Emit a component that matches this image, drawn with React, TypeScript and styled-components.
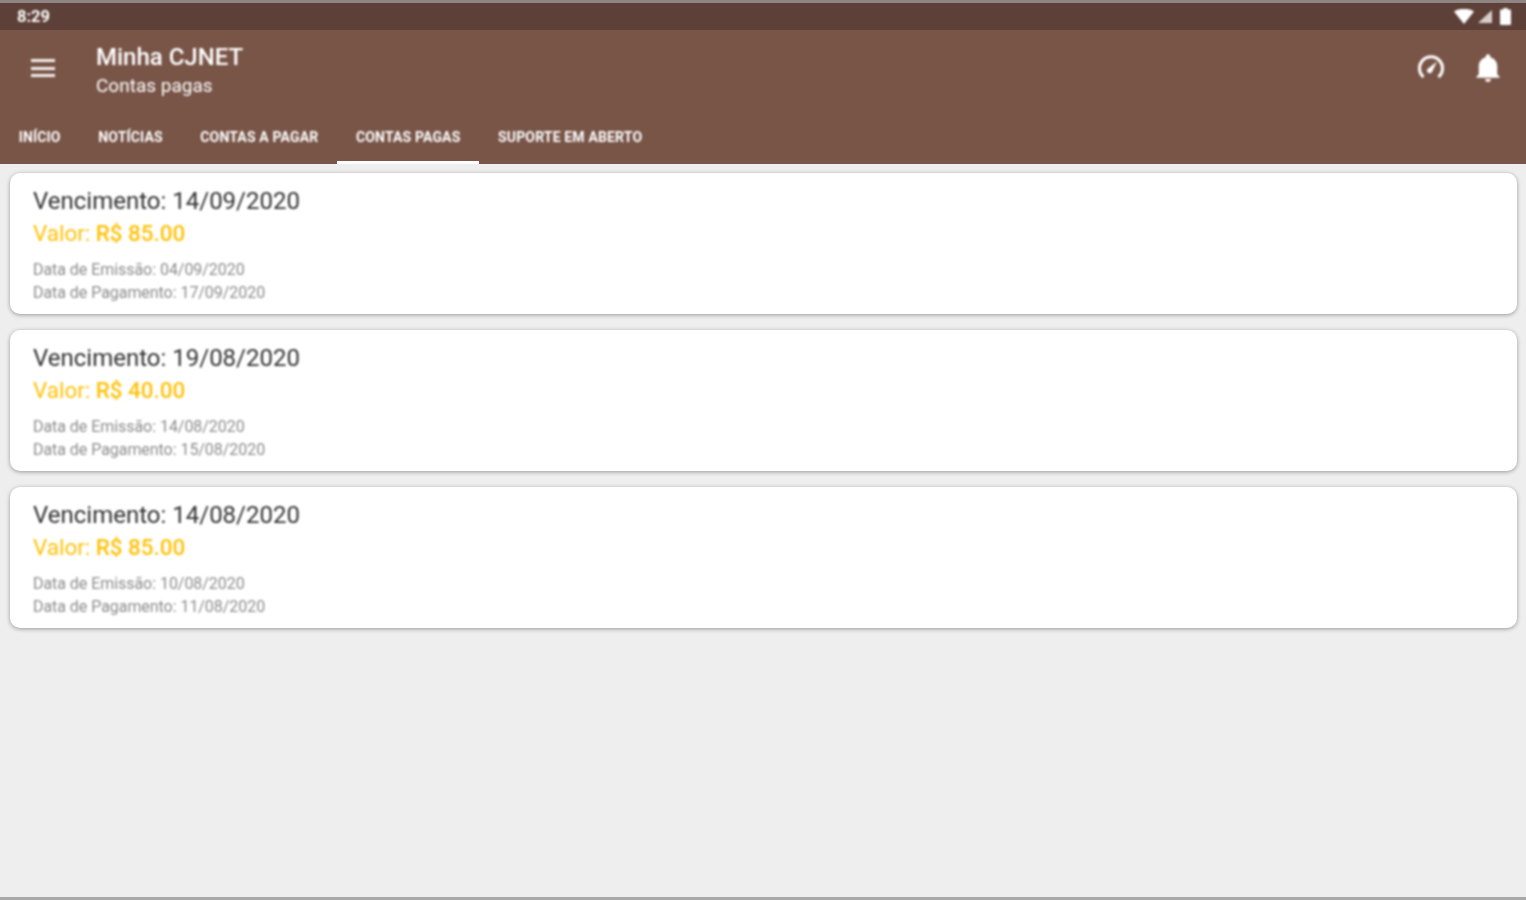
import React from 'react';
import styled, { createGlobalStyle } from 'styled-components';

const GlobalStyle = createGlobalStyle`
  html, body {
    margin: 0;
    padding: 0;
    height: 100%;
    background: #eeeeee;
    font-family: Roboto, "Liberation Sans", sans-serif;
  }
  #root {
    height: 100%;
  }
`;

const Page = styled.div`
  height: 900px;
  overflow: hidden;
  display: flex;
  flex-direction: column;
  background: #eeeeee;
  border-bottom: 3px solid #a8a8a8;
  box-sizing: border-box;
`;

const StatusBar = styled.div`
  height: 27px;
  margin-top: 3px;
  box-shadow: 0 -3px 0 #8f8583;
  background: #5d4037;
  display: flex;
  align-items: center;
  justify-content: space-between;
  padding: 0 15px 0 17px;
  color: #fff;
  flex-shrink: 0;
`;

const Clock = styled.span`
  font-size: 16.500px;
  font-weight: 700;
  filter: blur(0.8px);
`;

const StatusIcons = styled.div`
  display: flex;
  align-items: center;
  gap: 3px;
  filter: blur(0.8px);
`;

const AppBar = styled.header`
  height: 134px;
  background: #795548;
  color: #fff;
  display: flex;
  flex-direction: column;
  flex-shrink: 0;
`;

const TopRow = styled.div`
  height: 78px;
  display: flex;
  align-items: center;
  padding: 0 24px 0 31px;
`;

const MenuButton = styled.div`
  width: 24px;
  height: 18px;
  margin-top: -2px;
  margin-right: 41px;
  display: flex;
  flex-direction: column;
  justify-content: space-between;
  filter: blur(0.8px);

  span {
    display: block;
    height: 3px;
    background: #f3eeec;
  }
`;

const Titles = styled.div`
  flex: 1;
  display: flex;
  flex-direction: column;
  gap: 3px;
  margin-top: 3px;
  filter: blur(0.8px);
`;

const Title = styled.div`
  font-size: 24px;
  line-height: 28px;
  font-weight: 500;
`;

const Subtitle = styled.div`
  font-size: 19px;
  line-height: 24px;
  color: #fff;
`;

const Actions = styled.div`
  display: flex;
  align-items: center;
  gap: 29px;
  margin-top: -2px;
  filter: blur(0.8px);
`;

const Tabs = styled.nav`
  display: flex;
  height: 56px;
  flex-shrink: 0;
`;

const Tab = styled.div<{ $active?: boolean }>`
  padding: 2px 18.8px 0;
  display: flex;
  align-items: center;
  font-size: 14px;
  font-weight: 700;
  letter-spacing: 0.15px;
  text-transform: uppercase;
  position: relative;
  color: #fff;

  span {
    filter: blur(0.8px);
  }

  ${(p) =>
    p.$active &&
    `
    &::after {
      content: '';
      position: absolute;
      left: 0;
      right: 0;
      bottom: 0;
      height: 3px;
      background: #fff;
    }
  `}
`;

const List = styled.main`
  padding: 9px 9px 0 10px;
  display: flex;
  flex-direction: column;
  gap: 16px;
`;

const Card = styled.article`
  height: 141px;
  box-sizing: border-box;
  background: #fff;
  border-radius: 10px;
  box-shadow: 0 1px 4px rgba(0, 0, 0, 0.36);
  padding: 14px 23px;
  display: flex;
  flex-direction: column;
`;

const Due = styled.div`
  font-size: 24px;
  line-height: 29px;
  color: #333;
  filter: blur(0.8px);
`;

const Amount = styled.div`
  font-size: 22.400px;
  line-height: 29px;
  margin-top: 3px;
  margin-bottom: 10px;
  color: #ffc107;
  filter: blur(0.8px);
`;

const AmountValue = styled.span`
  font-weight: 500;
`;

const Meta = styled.div`
  font-size: 16px;
  line-height: 23px;
  letter-spacing: -0.05px;
  color: #8c8c8c;
  filter: blur(0.9px);
`;

const tabs = ['Início', 'Notícias', 'Contas a pagar', 'Contas pagas', 'Suporte em aberto'];

const bills = [
  { due: '14/09/2020', value: '85.00', issued: '04/09/2020', paid: '17/09/2020' },
  { due: '19/08/2020', value: '40.00', issued: '14/08/2020', paid: '15/08/2020' },
  { due: '14/08/2020', value: '85.00', issued: '10/08/2020', paid: '11/08/2020' },
];

const App: React.FC = () => (
  <Page>
    <GlobalStyle />
    <StatusBar>
      <Clock>8:29</Clock>
      <StatusIcons>
        <svg width="20" height="15" viewBox="0 0 20 15">
          <path d="M0 2.500C5.500-1 14.500-1 20 2.500L10 15z" fill="#fff" />
        </svg>
        <svg width="15" height="15" viewBox="0 0 15 15">
          <path d="M15 1v13H1z" fill="#d8cfcc" />
        </svg>
        <svg width="11" height="17" viewBox="0 0 11 17" style={{ marginLeft: 5 }}>
          <path d="M3.500 0h4v1.500H10a1 1 0 0 1 1 1V16a1 1 0 0 1-1 1H1a1 1 0 0 1-1-1V2.500a1 1 0 0 1 1-1h2.500z" fill="#fff" />
        </svg>
      </StatusIcons>
    </StatusBar>
    <AppBar>
      <TopRow>
        <MenuButton>
          <span />
          <span />
          <span />
        </MenuButton>
        <Titles>
          <Title>Minha CJNET</Title>
          <Subtitle>Contas pagas</Subtitle>
        </Titles>
        <Actions>
          <svg width="28" height="28" viewBox="0 0 28 28" fill="none">
            <path d="M6.500 23A11.500 11.500 0 1 1 21.500 23" stroke="#fff" strokeWidth="3" />
            <path d="M10.500 15 20 7.500l-5 10.500a2.500 2.500 0 0 1-4.500-3z" fill="#fff" />
          </svg>
          <svg width="28" height="30" viewBox="0 0 24 26">
            <path d="M12 25a2.500 2.500 0 0 0 2.500-2.500h-5A2.500 2.500 0 0 0 12 25zm8-6.500v-7c0-3.900-2.600-7-6-7.800V3a2 2 0 0 0-4 0v.7c-3.400.8-6 3.900-6 7.800v7l-2 2v1h20v-1z" fill="#fff" />
          </svg>
        </Actions>
      </TopRow>
      <Tabs>
        {tabs.map((tab) => (
          <Tab key={tab} $active={tab === 'Contas pagas'}>
            <span>{tab}</span>
          </Tab>
        ))}
      </Tabs>
    </AppBar>
    <List>
      {bills.map((bill) => (
        <Card key={bill.due}>
          <Due>Vencimento: {bill.due}</Due>
          <Amount>
            Valor: <AmountValue>R$ {bill.value}</AmountValue>
          </Amount>
          <Meta>Data de Emissão: {bill.issued}</Meta>
          <Meta>Data de Pagamento: {bill.paid}</Meta>
        </Card>
      ))}
    </List>
  </Page>
);

export default App;
